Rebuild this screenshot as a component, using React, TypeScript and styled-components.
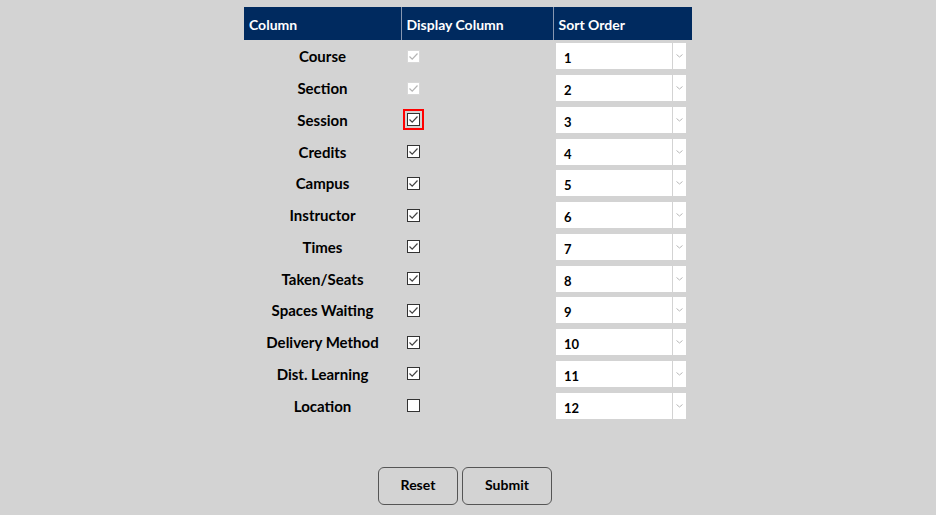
import React, { useState } from 'react';
import styled, { createGlobalStyle, css } from 'styled-components';

const GlobalStyle = createGlobalStyle`
  html, body {
    margin: 0;
    padding: 0;
    background: #d3d3d3;
    font-family: Lato, "Open Sans", Arial, sans-serif;
  }
`;

const Page = styled.div`
  display: flex;
  flex-direction: column;
  align-items: center;
  padding-top: 7px;
  min-height: 515px;
  box-sizing: border-box;
`;

const Table = styled.table`
  border-collapse: collapse;
  width: 448px;
  table-layout: fixed;
`;

const HeadCell = styled.th<{ $w: number; $sep?: boolean }>`
  width: ${(p) => p.$w}px;
  height: 33px;
  padding: 2px 0 0 5px;
  background: #002a5f;
  color: #fff;
  font-size: 14px;
  font-weight: 700;
  text-align: left;
  box-sizing: border-box;
  ${(p) =>
    p.$sep &&
    css`
      border-left: 1px solid #8797b0;
    `}
`;

const Row = styled.tr`
  height: 31.75px;
`;

const NameCell = styled.td`
  text-align: center;
  font-size: 15px;
  font-weight: 700;
  color: #000;
  padding: 1px 0 0 0;
`;

const BoxCell = styled.td`
  padding: 0 0 0 6px;
  vertical-align: middle;
`;

const SelectCell = styled.td`
  padding: 0 0 0 3px;
  vertical-align: middle;
`;

const Box = styled.span<{ $disabled?: boolean; $focus?: boolean }>`
  display: flex;
  align-items: center;
  justify-content: center;
  width: 13px;
  height: 13px;
  box-sizing: border-box;
  margin-top: 1px;
  background: #fff;
  border: 1px solid ${(p) => (p.$disabled ? '#d8d8d8' : '#333')};
  cursor: ${(p) => (p.$disabled ? 'default' : 'pointer')};
  ${(p) =>
    p.$focus &&
    css`
      outline: 2px solid #ff0000;
      outline-offset: 2px;
    `}
  svg {
    display: block;
  }
`;

const Select = styled.div`
  display: flex;
  width: 130px;
  height: 26px;
  margin-top: 1px;
  gap: 1px;
`;

const SelectValue = styled.div`
  flex: 1;
  background: #fff;
  display: flex;
  align-items: center;
  padding-left: 8px;
  padding-top: 4px;
  font-size: 13px;
  font-weight: 700;
  color: #000;
`;

const SelectArrow = styled.div`
  width: 13px;
  background: #fff;
  display: flex;
  align-items: center;
  justify-content: center;
`;

const Buttons = styled.div`
  display: flex;
  gap: 4px;
  margin-top: 46px;
  margin-right: 6px;
`;

const Button = styled.button<{ $w: number }>`
  width: ${(p) => p.$w}px;
  height: 38px;
  padding: 0 0 3px;
  border: 1px solid #555;
  border-radius: 6px;
  background: transparent;
  font-family: Lato, "Open Sans", Arial, sans-serif;
  font-size: 14px;
  font-weight: 700;
  color: #000;
  cursor: pointer;
`;

const Check = ({ color }: { color: string }) => (
  <svg width="11" height="11" viewBox="0 0 11 11">
    <path d="M1.5 5.5 L4.2 8.2 L9.5 2.5" fill="none" stroke={color} strokeWidth="1.2" />
  </svg>
);

const Chevron = () => (
  <svg width="7" height="4" viewBox="0 0 7 4">
    <path d="M0.5 0.5 L3.5 3 L6.5 0.5" fill="none" stroke="#b8b8b8" strokeWidth="1" />
  </svg>
);

const columns = [
  'Course',
  'Section',
  'Session',
  'Credits',
  'Campus',
  'Instructor',
  'Times',
  'Taken/Seats',
  'Spaces Waiting',
  'Delivery Method',
  'Dist. Learning',
  'Location',
];

export default function App() {
  const [checked, setChecked] = useState<boolean[]>(columns.map((_, i) => i < 11));

  const toggle = (i: number) => {
    if (i < 2) return;
    setChecked((c) => c.map((v, j) => (j === i ? !v : v)));
  };

  return (
    <Page>
      <GlobalStyle />
      <Table>
        <thead>
          <tr>
            <HeadCell $w={157}>Column</HeadCell>
            <HeadCell $w={152} $sep>
              Display Column
            </HeadCell>
            <HeadCell $w={139} $sep>
              Sort Order
            </HeadCell>
          </tr>
        </thead>
        <tbody>
          {columns.map((name, i) => (
            <Row key={name}>
              <NameCell>{name}</NameCell>
              <BoxCell>
                <Box $disabled={i < 2} $focus={i === 2} onClick={() => toggle(i)}>
                  {checked[i] && <Check color={i < 2 ? '#b5b5b5' : '#444'} />}
                </Box>
              </BoxCell>
              <SelectCell>
                <Select>
                  <SelectValue>{i + 1}</SelectValue>
                  <SelectArrow>
                    <Chevron />
                  </SelectArrow>
                </Select>
              </SelectCell>
            </Row>
          ))}
        </tbody>
      </Table>
      <Buttons>
        <Button $w={80}>Reset</Button>
        <Button $w={90}>Submit</Button>
      </Buttons>
    </Page>
  );
}
